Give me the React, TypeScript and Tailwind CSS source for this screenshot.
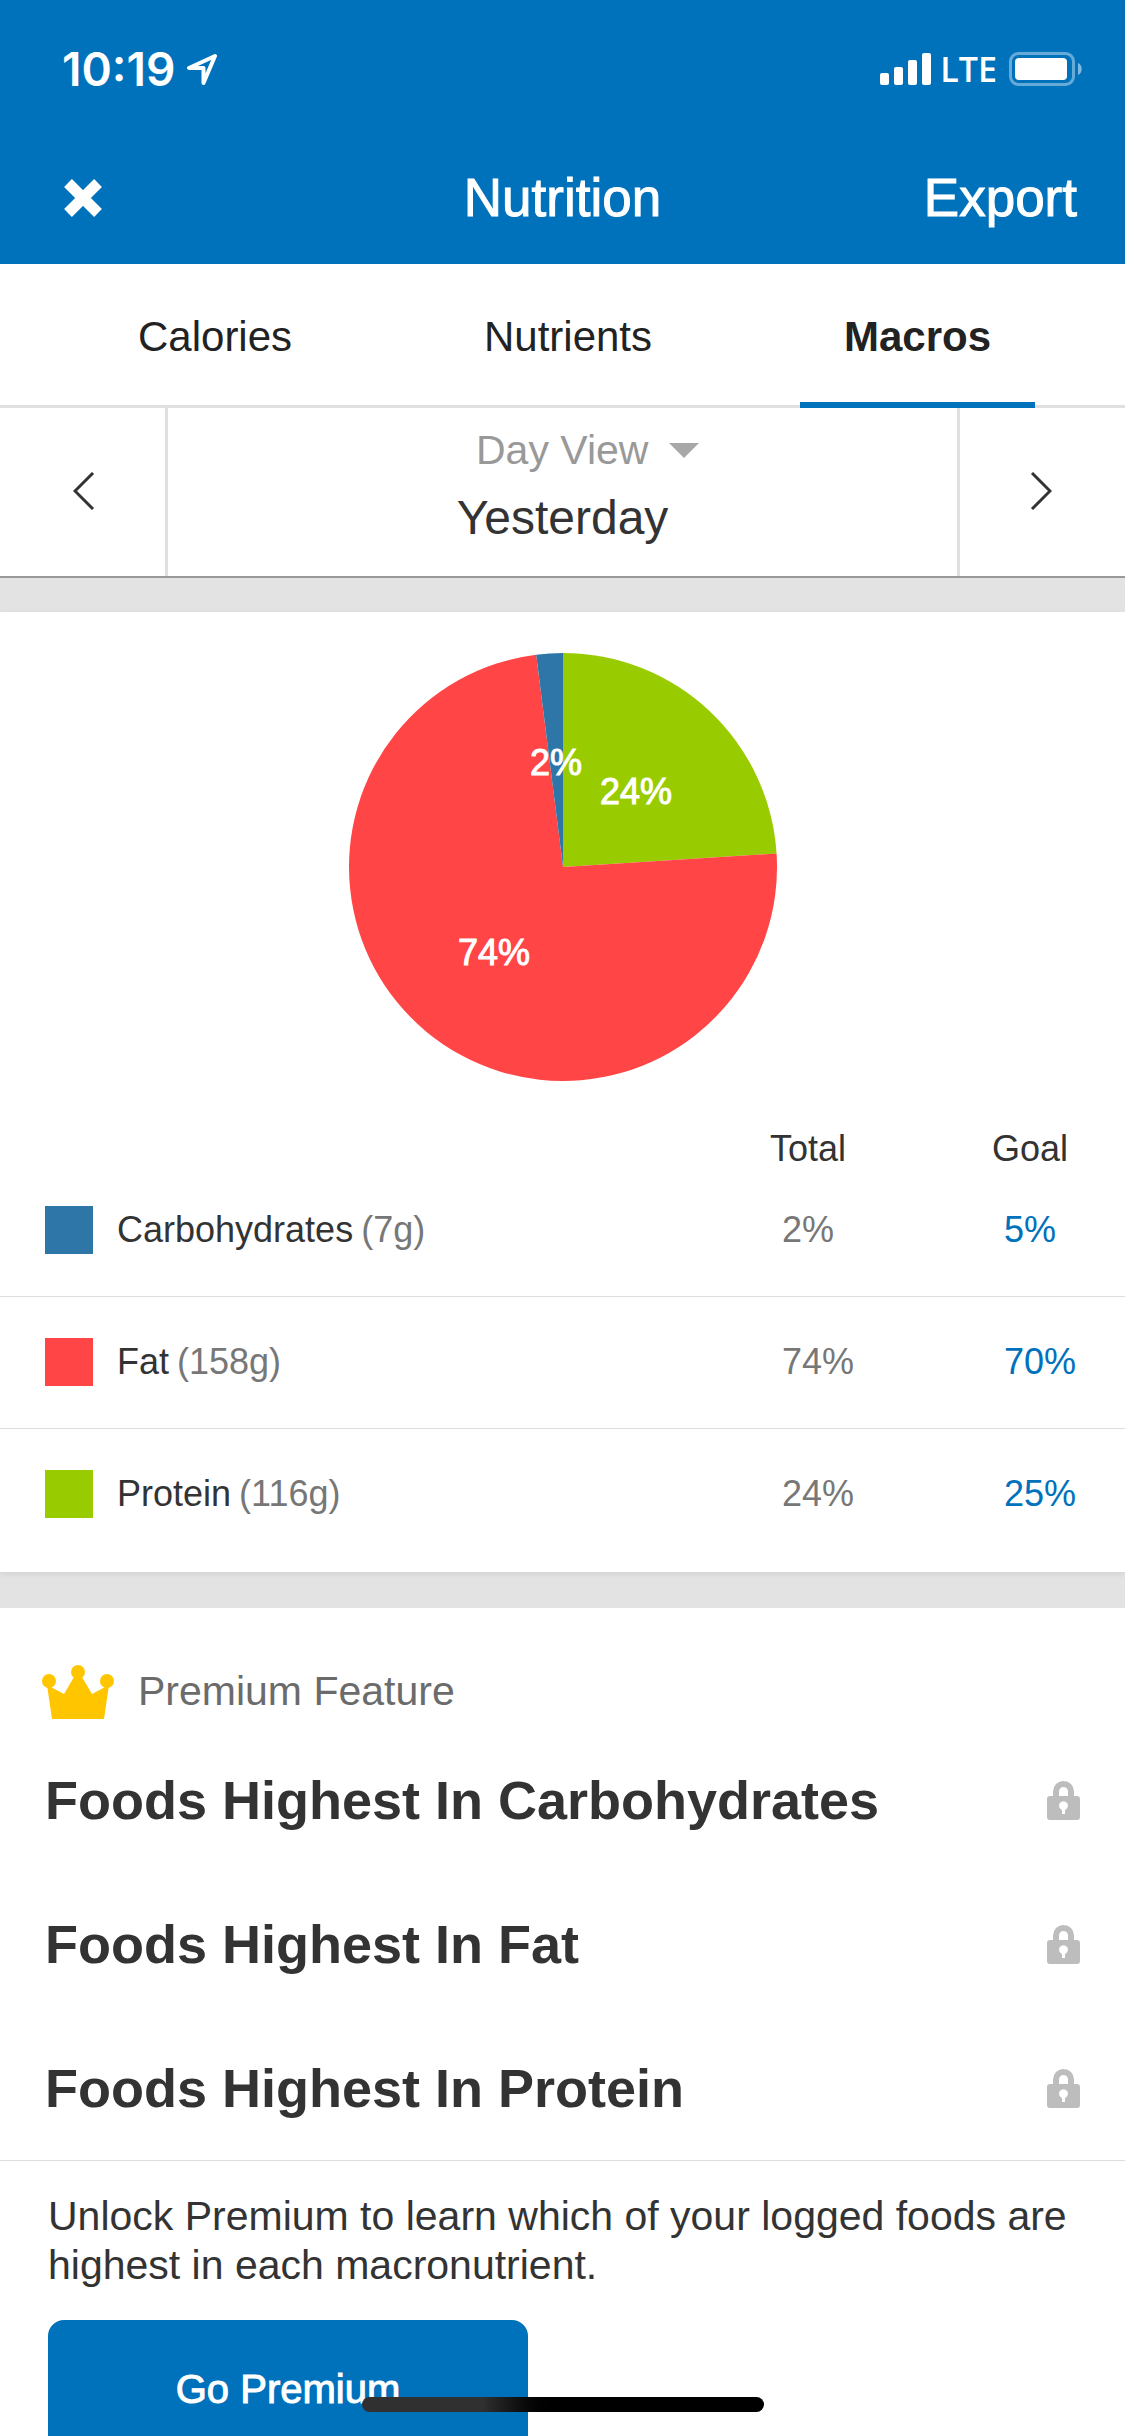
import React, { useState } from 'react';

interface Macro {
  name: string;
  grams: number;
  total: number;
  goal: number;
  swatch: string;
  fill: string;
}

const macros: Macro[] = [
  { name: 'Carbohydrates', grams: 7, total: 2, goal: 5, swatch: 'bg-[#2f76a8]', fill: '#2f76a8' },
  { name: 'Fat', grams: 158, total: 74, goal: 70, swatch: 'bg-[#ff4545]', fill: '#ff4545' },
  { name: 'Protein', grams: 116, total: 24, goal: 25, swatch: 'bg-[#99cc00]', fill: '#99cc00' },
];

const tabs = ['Calories', 'Nutrients', 'Macros'];

const RADIUS = 214;

const point = (percent: number, r: number) => {
  const angle = (percent / 100) * Math.PI * 2;
  return { x: RADIUS + r * Math.sin(angle), y: RADIUS - r * Math.cos(angle) };
};

const StatusBar: React.FC = () => (
  <div className="flex h-[132px] items-center justify-between pt-1.5 pr-[43px] pl-[62px]">
    <div className="flex items-center gap-3">
      <span className="font-['Inter',sans-serif] text-[46px] font-semibold">10:19</span>
      <svg width="30" height="31" viewBox="0 0 30 31" fill="none" stroke="currentColor" strokeWidth="4" strokeLinejoin="round">
        <path d="M28 2 2 14h14.500V29z" />
      </svg>
    </div>
    <div className="flex items-center">
      <svg width="52" height="32" viewBox="0 0 52 32" fill="currentColor">
        <rect x="0" y="20" width="9" height="12" rx="2" />
        <rect x="14" y="14" width="9" height="18" rx="2" />
        <rect x="28" y="7" width="9" height="25" rx="2" />
        <rect x="42" y="0" width="9" height="32" rx="2" />
      </svg>
      <span className="mr-3 ml-2 font-['Open_Sans',sans-serif] text-[34px] leading-10 font-semibold">LTE</span>
      <svg width="73" height="34" viewBox="0 0 73 34" fill="currentColor">
        <rect x="1.5" y="1.5" width="63" height="31" rx="8" fill="none" stroke="currentColor" strokeWidth="3" opacity="0.4" />
        <rect x="6" y="6" width="52" height="22" rx="4" />
        <path d="M69 11c5 2 5 10 0 12z" opacity="0.5" />
      </svg>
    </div>
  </div>
);

const PieChart: React.FC = () => {
  const slices = [...macros].reverse();
  let start = 0;

  return (
    <svg width="428" height="428" viewBox="0 0 428 428" role="img" aria-label="Macros">
      {slices.map((m) => {
        const from = point(start, RADIUS);
        const to = point(start + m.total, RADIUS);
        start += m.total;
        return (
          <path
            key={m.name}
            d={`M${RADIUS} ${RADIUS}L${from.x} ${from.y}A${RADIUS} ${RADIUS} 0 ${m.total > 50 ? 1 : 0} 1 ${to.x} ${to.y}Z`}
            fill={m.fill}
          />
        );
      })}
      <g fill="#fff" stroke="#fff" fontSize="36" textAnchor="middle">
        <text x="287" y="151">24%</text>
        <text x="145" y="312">74%</text>
        <text x="207" y="122">2%</text>
      </g>
    </svg>
  );
};

const CrownIcon: React.FC = () => (
  <svg width="72" height="54" viewBox="0 0 72 54" fill="#ffc600">
    <path d="M5 20 22 29 32 12h8l10 17 17-9-5 34H10z" />
    <circle cx="7" cy="16" r="7" />
    <circle cx="36" cy="7" r="7" />
    <circle cx="65" cy="16" r="7" />
  </svg>
);

const LockIcon: React.FC = () => (
  <svg width="33" height="39" viewBox="0 0 33 39" fill="#bdbdbd">
    <path
      fillRule="evenodd"
      d="M6 15v-4.500a10.500 10.500 0 0 1 21 0V15h3a3 3 0 0 1 3 3v18a3 3 0 0 1-3 3H3a3 3 0 0 1-3-3V18a3 3 0 0 1 3-3zM12 15h9v-4.500a4.500 4.500 0 0 0-9 0zM15 29v4h3v-4a4.500 4.500 0 1 0-3 0z"
    />
  </svg>
);

export default function App() {
  const [activeTab, setActiveTab] = useState('Macros');

  return (
    <div className="flex h-screen flex-col overflow-hidden bg-[#e3e3e3] font-['Liberation_Sans',Arial,sans-serif] text-[#333]">
      <header className="shrink-0 bg-[#0072bc] text-white">
        <StatusBar />
        <div className="grid h-[132px] grid-cols-3 items-center px-12 text-[53px] leading-[60px]">
          <button aria-label="Close" className="ml-4 justify-self-start">
            <svg width="38" height="38" viewBox="0 0 38 38" stroke="currentColor" strokeWidth="11">
              <path d="M4 4l30 30M34 4 4 34" />
            </svg>
          </button>
          <h1 className="justify-self-center [-webkit-text-stroke:1px_white]">Nutrition</h1>
          <button className="justify-self-end [-webkit-text-stroke:1px_white]">Export</button>
        </div>
      </header>

      <nav className="flex h-36 shrink-0 justify-between border-b-[3px] border-[#e0e0e0] bg-white pr-[90px] pl-[94px] text-[42px] text-[#222]">
        {tabs.map((tab) => (
          <button
            key={tab}
            onClick={() => setActiveTab(tab)}
            className={
              tab === activeTab
                ? '-mb-[3px] border-b-[6px] border-[#0072bc] px-11 pt-1.5 font-bold'
                : '-mb-[3px] border-b-[6px] border-transparent px-11 pt-1.5'
            }
          >
            {tab}
          </button>
        ))}
      </nav>

      <div className="flex h-[170px] shrink-0 border-b-2 border-[#999] bg-white">
        <button
          aria-label="Previous day"
          className="flex w-[168px] items-center justify-center border-r-[3px] border-[#e0e0e0] pb-[3px] pl-[3px]"
        >
          <svg width="22" height="38" viewBox="0 0 22 38" fill="none" stroke="#333" strokeWidth="3">
            <path d="M20 1 2 19l18 18" />
          </svg>
        </button>
        <div className="flex flex-1 flex-col items-center pt-3">
          <div className="relative">
            <select aria-label="View" className="h-[60px] appearance-none bg-transparent text-[41px] text-[#999]">
              <option>Day View</option>
            </select>
            <svg
              className="pointer-events-none absolute top-[23px] left-full ml-5"
              width="30"
              height="15"
              viewBox="0 0 30 15"
              fill="#a8a8a8"
            >
              <path d="M0 0h30L15 15z" />
            </svg>
          </div>
          <p className="mt-2 text-[48px] leading-[60px]">Yesterday</p>
        </div>
        <button
          aria-label="Next day"
          className="flex w-[168px] items-center justify-center border-l-[3px] border-[#e0e0e0] pr-[3px] pb-[3px]"
        >
          <svg width="22" height="38" viewBox="0 0 22 38" fill="none" stroke="#333" strokeWidth="3">
            <path d="m2 1 18 18L2 37" />
          </svg>
        </button>
      </div>

      <main>
        <section className="mt-[34px] flex flex-col items-center bg-white pt-[41px] pb-3 shadow-[0_2px_6px_rgba(0,0,0,0.08)]">
          <PieChart />
          <table className="mt-[53px] w-full table-fixed text-left text-4xl">
            <colgroup>
              <col />
              <col className="w-[222px]" />
              <col className="w-[133px]" />
            </colgroup>
            <thead>
              <tr className="leading-[30px]">
                <td />
                <th scope="col" className="p-0 font-normal">Total</th>
                <th scope="col" className="p-0 font-normal">Goal</th>
              </tr>
            </thead>
            <tbody>
              {macros.map((m) => (
                <tr key={m.name} className="h-[132px] border-b border-[#dedede] last:border-0">
                  <th scope="row" className="p-0 font-normal">
                    <div className="flex items-center pl-[45px]">
                      <span className={`mr-6 size-12 ${m.swatch}`} />
                      {m.name}
                      <span className="ml-2 text-[#777]">({m.grams}g)</span>
                    </div>
                  </th>
                  <td className="p-0 pl-3 text-[#777]">{m.total}%</td>
                  <td className="p-0 pl-3 text-[#0072bc]">{m.goal}%</td>
                </tr>
              ))}
            </tbody>
          </table>
        </section>

        <section className="mt-9 bg-white">
          <div className="flex h-[120px] items-center gap-6 pt-12 pl-[42px] text-[41px] text-[#6b6b6b]">
            <CrownIcon />
            Premium Feature
          </div>
          <ul className="border-b border-[#dedede]">
            {macros.map((m) => (
              <li key={m.name} className="flex h-36 items-center justify-between pr-[45px] pl-[45px]">
                <h2 className="text-[54px] font-bold">Foods Highest In {m.name}</h2>
                <LockIcon />
              </li>
            ))}
          </ul>
          <div className="px-12 pt-[31px] pb-20">
            <p className="text-[41px] leading-[49px]">
              Unlock Premium to learn which of your logged foods are highest in each macronutrient.
            </p>
            <button className="mt-[30px] h-[138px] w-[480px] rounded-2xl bg-[#0072bc] text-[40px] text-white [-webkit-text-stroke:1px_white]">
              Go Premium
            </button>
          </div>
        </section>
      </main>

      {/* home indicator */}
      <div className="fixed bottom-6 left-1/2 h-[15px] w-[402px] -translate-x-1/2 rounded-full bg-linear-to-r from-[#303030] from-30% to-black to-50%" />
    </div>
  );
}
